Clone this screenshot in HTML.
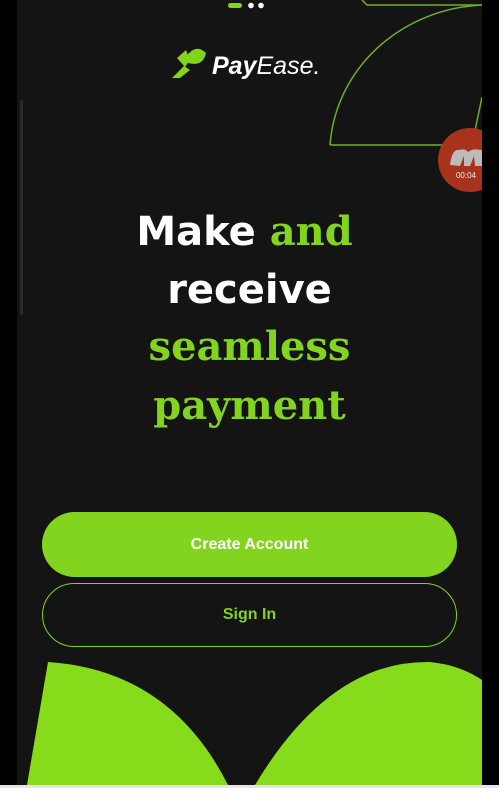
<!DOCTYPE html>
<html><head><meta charset="utf-8"><style>
html,body{margin:0;padding:0;width:499px;height:788px;overflow:hidden;background:#000;font-family:"Liberation Sans",sans-serif}
.scr{position:absolute;left:17px;top:0;width:465px;height:785px;background:#141414;overflow:hidden}
.t{position:absolute;left:0;width:499px;text-align:center;font-weight:bold;font-size:40px;line-height:1}
.w{color:#fff;font-family:"DejaVu Sans","Liberation Sans",sans-serif}
.g{color:#82d41e;font-family:"DejaVu Serif","Liberation Serif",serif}
.btn{position:absolute;left:42px;width:415px;border-radius:33px;box-sizing:border-box;text-align:center;font-weight:bold;font-size:17px}
</style></head><body>
<div class="scr"></div>
<svg width="499" height="788" style="position:absolute;left:0;top:0">
<path d="M362 0 L367 5 L482 5" fill="none" stroke="#6fae22" stroke-width="1.5"/>
<path d="M330 145 L482 145 M330 145 A160 150 0 0 1 482 5" fill="none" stroke="#6fae22" stroke-width="1.5"/>
<path d="M482 97 L472 145" stroke="#6fae22" stroke-width="1.5"/>
<circle cx="470" cy="160" r="32" fill="#a8321c"/>
<path d="M450 165 Q452 148 460 150 Q465 148 468 152 Q473 148 480 150 L482 150 L482 166 L475 166 L474 156 L470 166 L464 166 L464 156 L460 166 Z" fill="#bbb"/>
<text x="466" y="178" fill="#eee" font-size="8" font-family="Liberation Sans" text-anchor="middle">00:04</text>
<rect x="482" y="0" width="17" height="788" fill="#000"/>
<rect x="228" y="3" width="14" height="5" rx="2.5" fill="#82d41e"/>
<circle cx="251" cy="5.5" r="2.8" fill="#fff"/><circle cx="261" cy="5.5" r="2.8" fill="#fff"/>
<path d="M177 58 L186 50 L190 60 L185 67 Z" fill="#82d41e"/>
<path d="M188 54 Q197 44 206 53 Q203 67 188 63 Z" fill="#82d41e"/>
<path d="M172 78 L184 66 L190 70 L180 78 Z" fill="#82d41e"/>
<text x="212" y="74" fill="#fff" font-size="25" font-style="italic" font-family="Liberation Sans"><tspan font-weight="bold">Pay</tspan>Ease.</text>
<path d="M48 662 Q170 670 228 785 L27 785 Z" fill="#86db1a"/>
<path d="M255 785 Q330 660 430 662 Q460 665 482 680 L482 785 Z" fill="#86db1a"/>
<rect x="20" y="100" width="3" height="215" rx="1.5" fill="#2a2a2a"/>
<rect x="0" y="785" width="499" height="3" fill="#e6e6e6"/>
</svg>
<div class="t" style="top:212px;font-size:40px;left:-5px"><span class="w">Make </span><span class="g">and</span></div>
<div class="t w" style="top:270px">receive</div>
<div class="t g" style="top:327px">seamless</div>
<div class="t g" style="top:386px">payment</div>
<div class="btn" style="top:512px;height:65px;line-height:65px;background:#82d41e;color:#fff;font-size:16px">Create Account</div>
<div class="btn" style="top:583px;height:64px;line-height:62px;border:1.5px solid #82d41e;color:#82d41e;font-size:16px">Sign In</div>
</body></html>
